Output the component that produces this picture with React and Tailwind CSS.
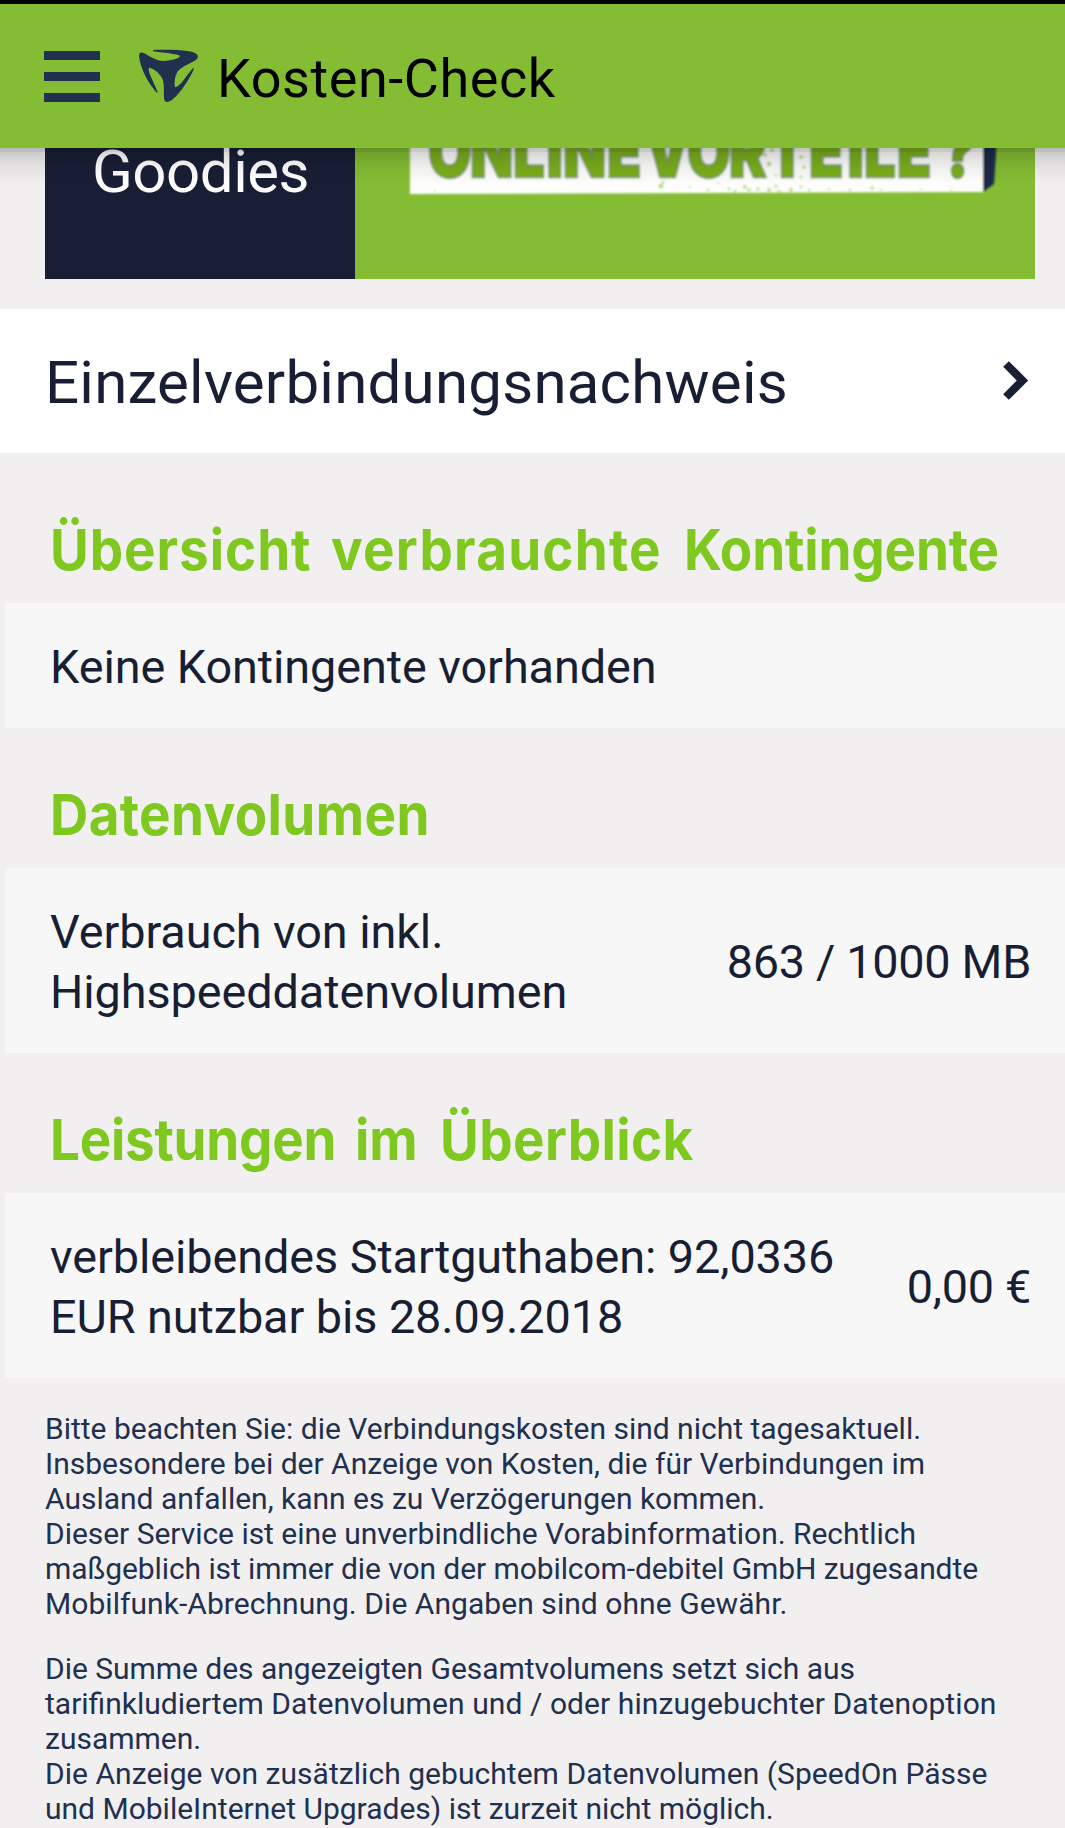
import React from "react";

function Logo() {
  return (
    <svg className="ml-[38px] h-[54px] w-[62px]" viewBox="54 57 186 162" fill="#22304f" aria-hidden="true">
      <path d="M57 78C57 69 62 65 71 69C91 79 108 93 130 93C148 93 179 86 180 79C180 72 139 70 99 64V60C135 59 174 59 207 64C230 68 236 76 233 83C227 97 184 106 172 126C163 143 163 161 165 172C181 170 201 134 219 114L222 116C211 141 193 171 172 194C160 208 149 216 140 216C134 216 132 211 132 202C131 183 133 166 129 151C123 132 103 116 87 113C81 124 104 160 113 186L110 188C85 159 61 117 57 78Z" />
    </svg>
  );
}

const specks = [
  [253, 41, 2.5], [255, 37, 1.5], [27, 46, 1], [200, 32, 1], [282, 42, 1], [300, 45, 1.3], [310, 38, 1], [321, 44, 1.4],
  [327, 46, 1.6], [337, 42, 2], [341, 45, 1.7], [350, 44, 1.8], [361, 45, 2], [368, 41, 1.7], [371, 46, 1.6], [383, 45, 2],
  [393, 42, 1.4], [401, 45, 1.2], [421, 44, 1], [442, 45, 1.3], [464, 43, 1.8], [473, 45, 1], [513, 44, 1], [543, 45, 1],
  [357, 10, 2], [361, 19, 2.5], [354, 28, 1.8], [393, 12, 2], [396, 22, 1.8], [393, 32, 1.5], [368, 30, 1.4], [364, 5, 2],
];

const letterStarts = [20, 62, 105, 138.5, 155, 199, 237, 279, 321, 360, 401, 439.5, 456, 489, 534];
const letterX = letterStarts.map((x) => (x / 0.78).toFixed(1)).join(" ");

function Banner() {
  return (
    <div className="flex-1 bg-[#84bd33]">
      <svg className="ml-[53px] block h-[56px] w-[592px]" viewBox="0 0 592 56" aria-label="Onlinevorteile">
        <defs>
          <filter id="soft" x="-5%" y="-20%" width="110%" height="140%">
            <feGaussianBlur stdDeviation="0.8" />
          </filter>
        </defs>
        <g filter="url(#soft)">
          <path d="M575 -10H589L586 36L575 44Z" fill="#1c2b4b" />
          <path d="M2 -10H575V44L2 46Z" fill="#fdfefc" />
          {specks.map(([x, y, r], i) => (
            <circle key={i} cx={x} cy={y - 3} r={r} fill="#b9da8a" />
          ))}
          <text
            x={letterX}
            y="28.5"
            transform="scale(0.78 1)"
            className="[font-family:Inter,sans-serif] text-[72px] font-black"
            fill="#7aae1d"
            stroke="#6f8c70"
            strokeWidth="2.5"
            paintOrder="stroke"
          >
            ONLINEVORTEILE?
          </text>
        </g>
      </svg>
    </div>
  );
}

function Heading({ className, children }) {
  return (
    <h2 className={`flex whitespace-nowrap pl-[50px] [font-family:Inter,sans-serif] text-[57px] font-bold leading-[60px] text-[#7fc820] ${className}`}>
      {children}
    </h2>
  );
}

function Word({ className = "", children }) {
  return <span className={`origin-left scale-x-93 ${className}`}>{children}</span>;
}

function Row({ className, label, value }) {
  return (
    <div className={`ml-[5px] flex items-center justify-between bg-[#f7f7f7] pl-[45px] pr-[34px] text-[46.8px] leading-[60px] text-[#181f35] ${className}`}>
      <div className="whitespace-nowrap tracking-[-0.08px]">{label}</div>
      {value && <div className="whitespace-nowrap tracking-[-0.3px]">{value}</div>}
    </div>
  );
}

export default function App() {
  return (
    <div className="h-[1828px] w-[1065px] overflow-hidden bg-[#f1eff0] [font-family:Roboto,sans-serif]">
      <header className="relative z-10 flex h-[148px] items-center border-t-4 border-black bg-[#84bd33] pl-[44px]">
        <div className="flex w-[56px] flex-col gap-[12px]">
          <div className="h-[9px] bg-[#22304f]" />
          <div className="h-[9px] bg-[#22304f]" />
          <div className="h-[9px] bg-[#22304f]" />
        </div>
        <Logo />
        <h1 className="ml-[17px] mt-[5px] text-[54px] leading-[64px] tracking-[0.55px] text-black">Kosten-Check</h1>
        <div className="absolute left-0 top-full h-[36px] w-full bg-linear-to-b from-black/18 via-black/6 to-transparent" />
        <div className="absolute left-0 top-full h-[4px] w-full bg-black/6" />
      </header>

      <section className="ml-[45px] mr-[30px] flex h-[131px] overflow-hidden">
        <div className="w-[310px] bg-[#181f35] pl-[47px] text-[60px] leading-[60px] tracking-[-0.5px] text-white">
          <div className="-mt-[6px]">Goodies</div>
        </div>
        <Banner />
      </section>

      <section className="mt-[30px] flex h-[144px] items-center justify-between bg-white pl-[45px] pr-[35px] text-[#181f35]">
        <div className="mt-[4px] text-[60px] leading-[70px] tracking-[0.23px]">Einzelverbindungsnachweis</div>
        <svg className="h-[42px] w-[28px]" viewBox="0 0 28 42" fill="none" stroke="currentColor" strokeWidth="8" aria-hidden="true">
          <path d="M4 4L20.500 20.500L4 37" />
        </svg>
      </section>

      <Heading className="mt-[67px]">
        <Word className="w-[281px] tracking-[1px]">Übersicht</Word>
        <Word className="w-[353px] tracking-[1.300px]">verbrauchte</Word>
        <Word className="tracking-[-0.200px]">Kontingente</Word>
      </Heading>
      <Row className="mt-[23px] h-[125px] pt-[2px]" label="Keine Kontingente vorhanden" />

      <Heading className="mt-[57px]">
        <Word className="tracking-[0.400px]">Datenvolumen</Word>
      </Heading>
      <Row
        className="mt-[23px] h-[185px] pt-[2px]"
        label={<>Verbrauch von inkl.<br />Highspeeddatenvolumen</>}
        value="863 / 1000 MB"
      />

      <Heading className="mt-[57px]">
        <Word className="w-[305px] tracking-[-0.300px]">Leistungen</Word>
        <Word className="w-[85px]">im</Word>
        <Word className="tracking-[0.400px]">Überblick</Word>
      </Heading>
      <Row
        className="mt-[23px] h-[185px] pt-[2px]"
        label={<>verbleibendes Startguthaben: 92,0336<br />EUR nutzbar bis 28.09.2018</>}
        value="0,00 €"
      />

      <div className="mt-[33px] whitespace-nowrap pl-[45px] text-[30px] leading-[35px] text-[#22304f]">
        <p>
          Bitte beachten Sie: die Verbindungskosten sind nicht tagesaktuell.<br />
          Insbesondere bei der Anzeige von Kosten, die für Verbindungen im<br />
          Ausland anfallen, kann es zu Verzögerungen kommen.<br />
          <span className="tracking-[-0.035px]">Dieser Service ist eine unverbindliche Vorabinformation. Rechtlich</span><br />
          <span className="tracking-[-0.085px]">maßgeblich ist immer die von der mobilcom-debitel GmbH zugesandte</span><br />
          <span className="tracking-[0.055px]">Mobilfunk-Abrechnung. Die Angaben sind ohne Gewähr.</span>
        </p>
        <p className="mt-[30px]">
          <span className="tracking-[-0.035px]">Die Summe des angezeigten Gesamtvolumens setzt sich aus</span><br />
          tarifinkludiertem <span className="tracking-[0.08px]">Datenvolumen und / oder hinzugebuchter Datenoption</span><br />
          zusammen.<br />
          <span className="tracking-[0.04px]">Die Anzeige von zusätzlich gebuchtem Datenvolumen (SpeedOn Pässe</span><br />
          und MobileInternet Upgrades) ist zurzeit nicht möglich.
        </p>
      </div>
    </div>
  );
}
